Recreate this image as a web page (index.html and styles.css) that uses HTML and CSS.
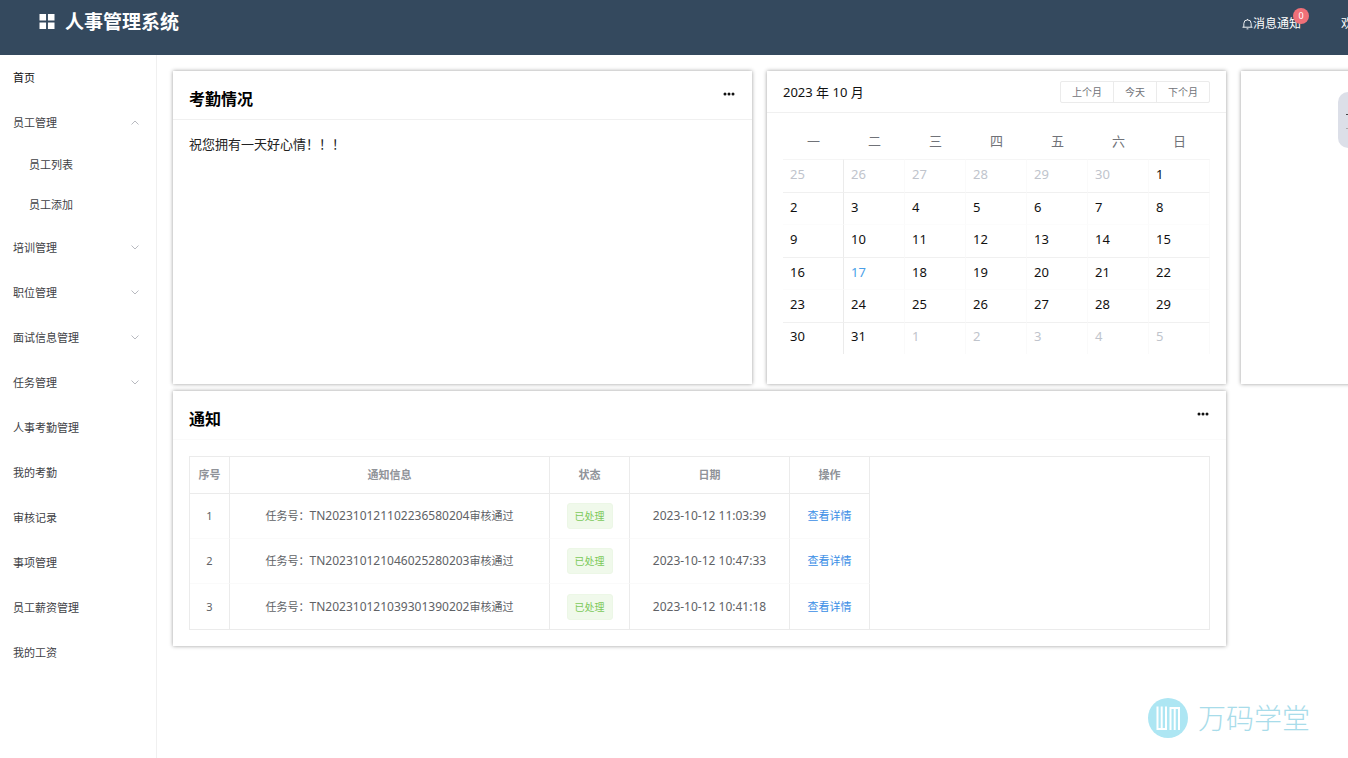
FILE: index.html
```html
<!DOCTYPE html>
<html lang="zh-CN">
<head>
<meta charset="utf-8">
<title>人事管理系统</title>
<link rel="stylesheet" href="styles.css">
</head>
<body>
<header class="topbar">
  <h1 class="brand">
    <svg class="brand-icon" viewBox="0 0 16 16" aria-hidden="true"><path d="M0 0h7v7H0zM9 0h7v7H9zM0 9h7v7H0zM9 9h7v7H9z"/></svg>
    人事管理系统
  </h1>
  <div class="topbar-right">
    <a class="notice" href="#">
      <svg class="bell" viewBox="0 0 12 12" aria-hidden="true"><path d="M.5 9.500h11M2 9.500V5.500a4 4 0 0 1 8 0v4M6 1.500V.5M5 11.300h2"/></svg>消息通知<span class="badge">0</span>
    </a>
    <span class="welcome">欢迎</span>
  </div>
</header>
<div class="shell">
  <nav class="sidebar">
    <ul class="menu">
      <li><a class="menu-item active" href="#">首页</a></li>
      <li>
        <button class="menu-item" type="button">员工管理<svg class="chevron" viewBox="0 0 8 5"><path d="M.5 4.500 4 1l3.500 3.500"/></svg></button>
        <ul class="submenu">
          <li><a class="menu-item sub" href="#">员工列表</a></li>
          <li><a class="menu-item sub" href="#">员工添加</a></li>
        </ul>
      </li>
      <li><button class="menu-item" type="button">培训管理<svg class="chevron" viewBox="0 0 8 5"><path d="M.5.5 4 4 7.500.5"/></svg></button></li>
      <li><button class="menu-item" type="button">职位管理<svg class="chevron" viewBox="0 0 8 5"><path d="M.5.5 4 4 7.500.5"/></svg></button></li>
      <li><button class="menu-item" type="button">面试信息管理<svg class="chevron" viewBox="0 0 8 5"><path d="M.5.5 4 4 7.500.5"/></svg></button></li>
      <li><button class="menu-item" type="button">任务管理<svg class="chevron" viewBox="0 0 8 5"><path d="M.5.5 4 4 7.500.5"/></svg></button></li>
      <li><a class="menu-item" href="#">人事考勤管理</a></li>
      <li><a class="menu-item" href="#">我的考勤</a></li>
      <li><a class="menu-item" href="#">审核记录</a></li>
      <li><a class="menu-item" href="#">事项管理</a></li>
      <li><a class="menu-item" href="#">员工薪资管理</a></li>
      <li><a class="menu-item" href="#">我的工资</a></li>
    </ul>
  </nav>
  <main class="content">
    <section class="card attendance">
      <div class="card-head">
        <h2 class="card-title">考勤情况</h2>
        <button class="more" type="button" aria-label="更多"><svg viewBox="0 0 12 4"><circle cx="2" cy="2" r="1.500"/><circle cx="6" cy="2" r="1.500"/><circle cx="10" cy="2" r="1.500"/></svg></button>
      </div>
      <p class="greeting">祝您拥有一天好心情！！！</p>
    </section>
    <section class="card">
      <div class="cal-head">
        <span>2023 年 10 月</span>
        <div class="cal-buttons">
          <button type="button">上个月</button><button type="button">今天</button><button type="button">下个月</button>
        </div>
      </div>
      <div class="cal-body">
        <table class="cal">
          <thead><tr><th>一</th><th>二</th><th>三</th><th>四</th><th>五</th><th>六</th><th>日</th></tr></thead>
          <tbody>
            <tr><td class="off">25</td><td class="off">26</td><td class="off">27</td><td class="off">28</td><td class="off">29</td><td class="off">30</td><td>1</td></tr>
            <tr><td>2</td><td>3</td><td>4</td><td>5</td><td>6</td><td>7</td><td>8</td></tr>
            <tr><td>9</td><td>10</td><td>11</td><td>12</td><td>13</td><td>14</td><td>15</td></tr>
            <tr><td>16</td><td class="today">17</td><td>18</td><td>19</td><td>20</td><td>21</td><td>22</td></tr>
            <tr><td>23</td><td>24</td><td>25</td><td>26</td><td>27</td><td>28</td><td>29</td></tr>
            <tr><td>30</td><td>31</td><td class="off">1</td><td class="off">2</td><td class="off">3</td><td class="off">4</td><td class="off">5</td></tr>
          </tbody>
        </table>
      </div>
    </section>
    <section class="card side-card"></section>
    <section class="card notices">
      <div class="card-head">
        <h2 class="card-title">通知</h2>
        <button class="more" type="button" aria-label="更多"><svg viewBox="0 0 12 4"><circle cx="2" cy="2" r="1.500"/><circle cx="6" cy="2" r="1.500"/><circle cx="10" cy="2" r="1.500"/></svg></button>
      </div>
      <div class="table-wrap">
        <table class="grid">
          <colgroup><col class="w-no"><col class="w-info"><col class="w-state"><col class="w-date"><col class="w-act"></colgroup>
          <thead><tr><th>序号</th><th>通知信息</th><th>状态</th><th>日期</th><th>操作</th></tr></thead>
          <tbody>
            <tr><td>1</td><td>任务号：<span class="num">TN202310121102236580204</span>审核通过</td><td><span class="tag">已处理</span></td><td class="num">2023-10-12 11:03:39</td><td><a class="link" href="#">查看详情</a></td></tr>
            <tr><td>2</td><td>任务号：<span class="num">TN202310121046025280203</span>审核通过</td><td><span class="tag">已处理</span></td><td class="num">2023-10-12 10:47:33</td><td><a class="link" href="#">查看详情</a></td></tr>
            <tr><td>3</td><td>任务号：<span class="num">TN202310121039301390202</span>审核通过</td><td><span class="tag">已处理</span></td><td class="num">2023-10-12 10:41:18</td><td><a class="link" href="#">查看详情</a></td></tr>
          </tbody>
        </table>
      </div>
    </section>
  </main>
</div>
<div class="float-tab" aria-hidden="true"><svg viewBox="0 0 10 56"><path class="dark" d="M8 22.500h2"/><path class="dim" d="M8 36.500h2"/></svg></div>
<div class="watermark">
  <svg viewBox="0 0 40 40" aria-hidden="true"><circle cx="20" cy="20" r="20"/><path d="M9.500 8.500V31H18V8.500M13.700 8.500V31M22.500 32V10H31v22M26.700 32V10"/></svg>
  <span>万码学堂</span>
</div>
</body>
</html>
```
FILE: styles.css
```css
* { box-sizing: border-box; }

body {
  margin: 0;
  min-height: 100vh;
  display: flex;
  flex-direction: column;
  overflow: hidden;
  background: #fff;
  color: #111;
  font: 13px/20px "Noto Sans", "Noto Sans CJK SC", sans-serif;
}

button { font: inherit; color: inherit; background: none; border: 0; padding: 0; }
a { color: inherit; text-decoration: none; }
ul { list-style: none; margin: 0; padding: 0; }
table { border-collapse: separate; border-spacing: 0; table-layout: fixed; }

.topbar {
  height: 55px;
  flex: none;
  display: flex;
  justify-content: space-between;
  align-items: flex-start;
  background: #34495e;
  color: #fff;
  overflow: hidden;
}
.brand {
  display: flex;
  align-items: center;
  gap: 10px;
  margin: 0;
  padding: 8px 0 0 39px;
  font-size: 19px;
  line-height: 28px;
}
.brand-icon { width: 16px; height: 15px; margin-bottom: 2px; fill: #fff; }
.topbar-right {
  display: flex;
  gap: 40px;
  padding-top: 14px;
  font-size: 12px;
  white-space: nowrap;
}
.notice { position: relative; display: flex; align-items: center; }
.bell { width: 11px; height: 12px; fill: none; stroke: #fff; }
.badge {
  position: absolute;
  top: -6px;
  right: -8px;
  width: 16px;
  height: 16px;
  border-radius: 8px;
  background: #f07078;
  font-size: 9px;
  line-height: 16px;
  text-align: center;
}
.welcome { width: 7px; }

.shell { flex: 1; display: flex; }
.sidebar { width: 157px; flex: none; border-right: 1px solid #f0f0f0; }
.menu-item {
  display: flex;
  align-items: center;
  justify-content: space-between;
  width: 100%;
  height: 45px;
  padding: 0 17px 0 13px;
  font-size: 11px;
  color: #404145;
}
.menu-item.active { color: #111; }
.menu-item.sub { height: 40px; padding-left: 29px; }
.chevron { width: 8px; height: 5px; fill: none; stroke: #b8bac0; }

.content {
  flex: 1;
  min-width: 0;
  display: grid;
  grid-template-columns: minmax(0, 579fr) minmax(0, 459fr) 107px;
  grid-template-rows: auto auto;
  align-content: start;
  gap: 7px 15px;
  padding: 16px 0 0 16px;
}
.card { background: #fff; box-shadow: 0 0 4px rgba(0, 0, 0, .4); }
.side-card { margin-right: -16px; }
.notices { grid-column: 1 / 3; }
.card-head {
  display: flex;
  justify-content: space-between;
  align-items: flex-start;
  height: 49px;
  padding: 16px 16px 0;
  border-bottom: 1px solid #f0f0f0;
}
.notices .card-head { border-color: #fafafa; }
.card-title { margin: 0; font-size: 16px; line-height: 24px; color: #000; }
.more { display: flex; padding: 5px 0; }
.more svg { width: 14px; height: 4px; fill: #111; }
.greeting { margin: 0; padding: 14px 16px; color: #222; }

.cal-head {
  display: flex;
  justify-content: space-between;
  align-items: center;
  height: 42px;
  padding: 0 16px;
  border-bottom: 1px solid #f0f0f0;
}
.cal-buttons { display: flex; border: 1px solid #ebebeb; border-radius: 2px; }
.cal-buttons button { padding: 0 11px; font-size: 10px; line-height: 20px; color: #707278; }
.cal-buttons button + button { border-left: 1px solid #ebebeb; }
.cal-body { padding: 10px 16px 30px; }
.cal { width: 100%; height: 231px; }
.cal th { height: 36px; padding: 0; font-weight: 400; color: #707278; }
.cal td { padding: 0 7px 4px; border-right: 1px solid #fafafa; border-bottom: 1px solid #fcfcfc; }
.cal td:first-child { border-right-color: #ebebeb; }
.cal tbody tr:nth-child(odd) td { border-bottom-color: #f0f0f0; }
.cal tbody tr:first-child td { border-top: 1px solid #f5f5f5; }
.cal tbody tr:last-child td { border-bottom: 0; }
.cal .off { color: #c0c4cc; }
.cal .today { color: #4a9fe8; }

.table-wrap { margin: 16px; border: 1px solid #ebebeb; overflow: hidden; }
.grid { width: 680px; font-size: 11px; text-align: center; color: #606266; }
.w-no { width: 40px; }
.w-info { width: 320px; }
.w-state, .w-act { width: 80px; }
.w-date { width: 160px; }
.grid th { height: 37px; padding: 0; color: #909399; border-right: 1px solid #ebebeb; }
.grid td { height: 45px; padding: 0; border-right: 1px solid #ebebeb; border-bottom: 1px solid #fafafa; }
.grid tr:last-child td { border-bottom: 0; }
.grid th { border-bottom: 1px solid #ebebeb; }
.num { font-size: 12px; }
.tag {
  display: inline-block;
  padding: 0 7px;
  border: 1px solid #ecf7e6;
  border-radius: 3px;
  background: #f0f9eb;
  color: #7cc95a;
  font-size: 10px;
  line-height: 24px;
}
.link { color: #3a8ee6; }

.float-tab {
  position: absolute;
  top: 92px;
  right: 0;
  width: 10px;
  height: 56px;
  border-radius: 10px 0 0 10px;
  background: #dcdfe8;
}
.float-tab svg { display: block; width: 10px; height: 56px; }
.float-tab .dark { stroke: #444; }
.float-tab .dim { stroke: #aaa; }

.watermark {
  position: absolute;
  right: 38px;
  bottom: 20px;
  display: flex;
  align-items: center;
  gap: 10px;
  font-size: 28px;
  line-height: 40px;
  font-weight: 300;
  color: #a8dcea;
}
.watermark svg { width: 40px; height: 40px; fill: #ade6f3; }
.watermark path { fill: none; stroke: #fff; stroke-width: 2; }
```
